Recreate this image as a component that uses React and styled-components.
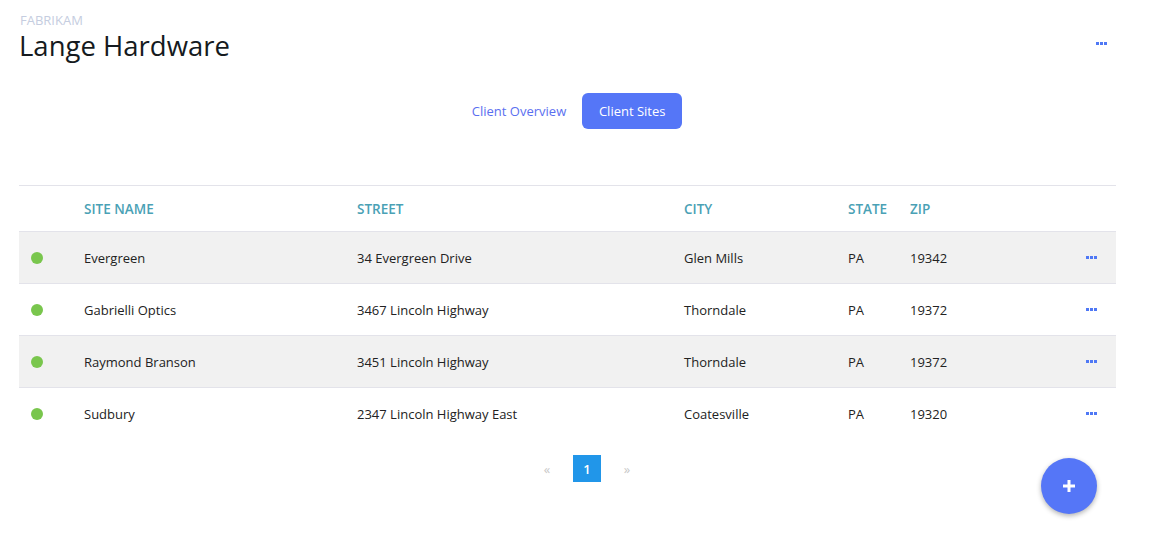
import React from "react";
import styled, { createGlobalStyle } from "styled-components";

const GlobalStyle = createGlobalStyle`
  body {
    margin: 0;
    background: #ffffff;
    font-family: "Open Sans", "Noto Sans", sans-serif;
    color: #222;
  }
`;

const Page = styled.div`
  padding: 14px 38px 0 19px;
  position: relative;
  min-height: 534px;
  box-sizing: border-box;
`;

const Header = styled.div`
  display: flex;
  justify-content: space-between;
  align-items: flex-start;
`;

const Brand = styled.div`
  font-size: 13px;
  line-height: 13px;
  color: #c5cde0;
  padding-left: 1px;
`;

const Title = styled.h1`
  margin: 3px 0 0;
  font-size: 27.5px;
  font-weight: 400;
  color: #151a20;
  line-height: 32px;
`;

const Dots = styled.span`
  display: inline-flex;
  gap: 1px;
  cursor: pointer;
  & > i {
    width: 3px;
    height: 3px;
    background: #4f78f5;
    display: block;
  }
`;

const HeaderDots = styled.div`
  padding-top: 28px;
  padding-right: 9px;
  display: flex;
`;

const Tabs = styled.div`
  display: flex;
  justify-content: center;
  align-items: center;
  gap: 16px;
  margin: 31px -38px 0 -19px;
`;

const Tab = styled.button`
  border: none;
  font-family: inherit;
  font-size: 13px;
  height: 36px;
  border-radius: 6px;
  background: ${(p) => (p.$active ? "#5576f7" : "transparent")};
  color: ${(p) => (p.$active ? "#ffffff" : "#5a6ff0")};
  padding: 0;
  width: ${(p) => (p.$active ? "100px" : "auto")};
`;

const Table = styled.div`
  margin-top: 56px;
  border-top: 1px solid #e3e3ea;
`;

const Row = styled.div`
  display: grid;
  grid-template-columns: 65px 273px 327px 164px 62px 1fr 40px;
  align-items: center;
  height: ${(p) => (p.$head ? "45px" : "51px")};
  background: ${(p) => (p.$shaded ? "#f1f1f1" : "transparent")};
  border-bottom: ${(p) => (p.$last ? "none" : "1px solid #e3e3ea")};
  font-size: 13px;
`;

const HeadCell = styled.div`
  color: #4aa1b5;
  font-weight: 600;
  font-size: 13.5px;
  text-transform: uppercase;
`;

const Cell = styled.div`
  color: #222;
`;

const ActionCell = styled.div`
  display: flex;
  justify-content: flex-end;
  padding-right: 19px;
`;

const StatusDot = styled.span`
  display: block;
  width: 12px;
  height: 12px;
  border-radius: 50%;
  background: #79c64d;
  margin-left: 12px;
`;

const Pager = styled.div`
  display: flex;
  justify-content: center;
  align-items: center;
  gap: 20px;
  margin: 16px -38px 0 -19px;
  padding-left: 20px;
`;

const PageArrow = styled.span`
  color: #c8c8c8;
  font-size: 13px;
  width: 12px;
  text-align: center;
`;

const PageNum = styled.span`
  width: 28px;
  height: 27px;
  display: flex;
  align-items: center;
  justify-content: center;
  background: #2196e9;
  color: #fff;
  font-size: 13px;
  font-weight: 600;
`;

const Fab = styled.button`
  position: absolute;
  left: 1041px;
  top: 458px;
  width: 56px;
  height: 56px;
  border-radius: 50%;
  border: none;
  background: #5576f7;
  box-shadow: 0 2px 5px rgba(0, 0, 0, 0.3);
  display: flex;
  align-items: center;
  justify-content: center;
`;

const ThreeDots = () => (
  <Dots>
    <i />
    <i />
    <i />
  </Dots>
);

const sites = [
  ["Evergreen", "34 Evergreen Drive", "Glen Mills", "PA", "19342"],
  ["Gabrielli Optics", "3467 Lincoln Highway", "Thorndale", "PA", "19372"],
  ["Raymond Branson", "3451 Lincoln Highway", "Thorndale", "PA", "19372"],
  ["Sudbury", "2347 Lincoln Highway East", "Coatesville", "PA", "19320"],
];

export default function App() {
  return (
    <>
      <GlobalStyle />
      <Page>
        <Header>
          <div>
            <Brand>FABRIKAM</Brand>
            <Title>Lange Hardware</Title>
          </div>
          <HeaderDots>
            <ThreeDots />
          </HeaderDots>
        </Header>

        <Tabs>
          <Tab>Client Overview</Tab>
          <Tab $active>Client Sites</Tab>
        </Tabs>

        <Table>
          <Row $head>
            <div />
            <HeadCell>Site Name</HeadCell>
            <HeadCell>Street</HeadCell>
            <HeadCell>City</HeadCell>
            <HeadCell>State</HeadCell>
            <HeadCell>Zip</HeadCell>
            <div />
          </Row>
          {sites.map((s, i) => (
            <Row key={s[0]} $shaded={i % 2 === 0} $last={i === sites.length - 1}>
              <StatusDot />
              {s.map((v, j) => (
                <Cell key={j}>{v}</Cell>
              ))}
              <ActionCell>
                <ThreeDots />
              </ActionCell>
            </Row>
          ))}
        </Table>

        <Pager>
          <PageArrow>«</PageArrow>
          <PageNum>1</PageNum>
          <PageArrow>»</PageArrow>
        </Pager>

        <Fab>
          <svg width="12" height="12" viewBox="0 0 12 12">
            <rect x="4.5" y="0" width="3" height="12" fill="#fff" />
            <rect x="0" y="4.5" width="12" height="3" fill="#fff" />
          </svg>
        </Fab>
      </Page>
    </>
  );
}
